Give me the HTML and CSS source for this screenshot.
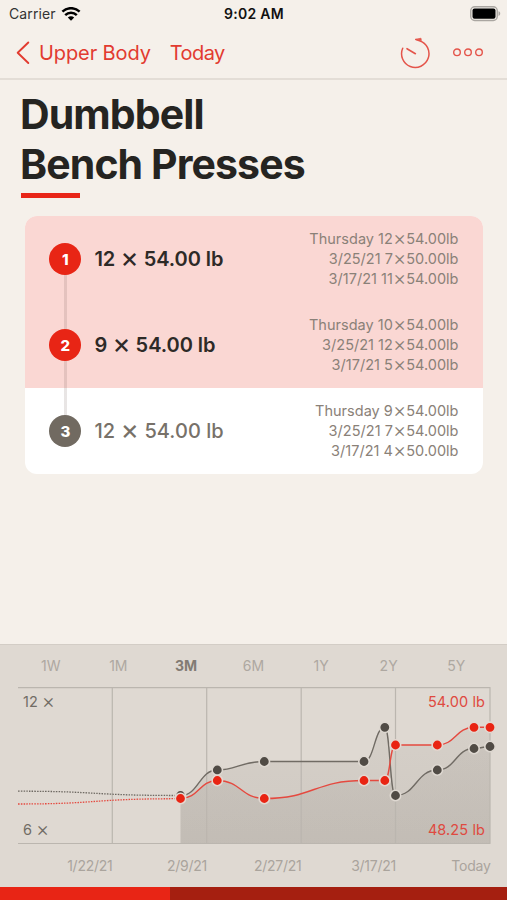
FILE: index.html
```html
<!DOCTYPE html>
<html lang="en">
<head>
<meta charset="utf-8">
<meta name="viewport" content="width=device-width, initial-scale=1">
<title>Dumbbell Bench Presses</title>
<link rel="stylesheet" href="styles.css">
</head>
<body>
<div class="screen">
  <header class="header">
    <div class="status">
      <div class="carrier"><span>Carrier</span>
        <svg width="20" height="14" viewBox="0 0 20 14" fill="none" stroke="#000" stroke-width="2.5"><path d="M1.400 4.700C6.200 0 13.800 0 18.600 4.700"/><path d="M4.200 8.200C7.500 5 12.500 5 15.800 8.200"/><path d="M6.800 10.400C8.600 8.700 11.400 8.700 13.200 10.400L10 13.700Z" fill="#000" stroke="none"/></svg>
      </div>
      <div class="clock">9:02 AM</div>
      <svg class="battery" width="31" height="16" viewBox="0 0 31 16"><rect x=".75" y=".75" width="26.500" height="13.700" rx="4" fill="none" stroke="#aaa6a1" stroke-width="1.400"/><rect x="2.500" y="2.500" width="23" height="10.200" rx="2" fill="#000"/><path d="M28.500 5.300C30.800 6 30.800 9.200 28.500 9.900Z" fill="#aaa6a1"/></svg>
    </div>
    <nav class="nav">
      <svg class="back" width="14" height="24" viewBox="0 0 14 24" fill="none" stroke="#e23b30" stroke-width="1.900" stroke-linecap="round" stroke-linejoin="round"><path d="M12.300 1.500 1.700 11.800 12.300 22"/></svg>
      <a class="parent">Upper Body</a>
      <a class="today">Today</a>
      <svg class="timer" width="32" height="32" viewBox="0 0 32 32" fill="none" stroke="#e4544a" stroke-width="1.500" stroke-linecap="round"><path d="M3.700 11.300A13.700 13.700 0 1 0 20.500 3.700L17 2.500"/><path d="M16.500 2.300 22 1.200 22.300 3.300Z" fill="#e4544a" stroke-width=".7" stroke-linejoin="round"/><path d="M8 11.700 16.400 16.700" stroke-width="1.600"/></svg>
      <svg class="more" width="32" height="10" viewBox="0 0 32 10" fill="none" stroke="#e4544a" stroke-width="1.400"><circle cx="5" cy="4.300" r="3.300"/><circle cx="16" cy="4.300" r="3.300"/><circle cx="27" cy="4.300" r="3.300"/></svg>
    </nav>
  </header>

  <main class="content">
    <h1 class="title"><span class="line-a">Dumbbell</span><br><span class="line-b">Bench Presses</span></h1>
    <div class="accent"></div>
    <section class="sets">
      <div class="set done first">
        <span class="num">1</span>
        <span class="reps">12 <i>×</i> 54.00 lb</span>
        <div class="history"><p>Thursday 12<i>×</i>54.00lb</p><p>3/25/21 7<i>×</i>50.00lb</p><p>3/17/21 11<i>×</i>54.00lb</p></div>
      </div>
      <div class="set done">
        <span class="num">2</span>
        <span class="reps">9 <i>×</i> 54.00 lb</span>
        <div class="history"><p>Thursday 10<i>×</i>54.00lb</p><p>3/25/21 12<i>×</i>54.00lb</p><p>3/17/21 5<i>×</i>54.00lb</p></div>
      </div>
      <div class="set last">
        <span class="num">3</span>
        <span class="reps">12 <i>×</i> 54.00 lb</span>
        <div class="history"><p>Thursday 9<i>×</i>54.00lb</p><p>3/25/21 7<i>×</i>54.00lb</p><p>3/17/21 4<i>×</i>50.00lb</p></div>
      </div>
    </section>
  </main>

  <section class="panel">
    <div class="ranges"><span>1W</span><span>1M</span><span class="active">3M</span><span>6M</span><span>1Y</span><span>2Y</span><span>5Y</span></div>
    <div class="chart">
      <svg width="507" height="158" viewBox="0 687 507 158" fill="none">
        <defs><linearGradient id="shade" gradientUnits="userSpaceOnUse" x1="0" y1="727" x2="0" y2="844"><stop offset="0" stop-color="#716b63" stop-opacity=".09"/><stop offset="1" stop-color="#716b63" stop-opacity=".14"/></linearGradient></defs>
        <path fill="url(#shade)" d="M180.500 843.500V795.500C199 795.500 199 770 217.300 770C236 770 241 761.500 264.300 761.500H364C374.400 761.500 374.400 727.300 384.800 727.300C390 727.300 390 795.500 395.300 795.500C416.300 795.500 416.300 770 437.300 770C455.600 770 455.600 748.500 474 748.500C482 748.500 482 746.500 490 746.500V843.500Z"/>
        <path fill="url(#shade)" d="M180.500 843.500V798.500C199 798.500 199 780.500 217.300 780.500C241 780.500 241 798.500 264.300 798.500C314 798.500 314 780.500 364 780.500H384.800C390 780.500 390 745 395.300 745H437.300C455.600 745 455.600 727.300 474 727.300H490V843.500Z"/>
        <path stroke="#bbb6af" stroke-width="1.200" d="M18 687.700H490.500M18 843.500H490.500M112.300 687.500V843.500M206.700 687.500V843.500M301.200 687.500V843.500M395.500 687.500V843.500M490 687.500V843.500"/>
        <g stroke-width="1.300" stroke-dasharray="1.500 1.200"><path stroke="#6e6962" d="M18 791.200C100 791.200 90 795.500 180 795.500"/><path stroke="#e5493f" d="M18 804C100 804 90 798.700 180 798.700"/></g>
        <path stroke="#706b64" stroke-width="1.400" d="M180.500 795.500C199 795.500 199 770 217.300 770C236 770 241 761.500 264.300 761.500H364C374.400 761.500 374.400 727.300 384.800 727.300C390 727.300 390 795.500 395.300 795.500C416.300 795.500 416.300 770 437.300 770C455.600 770 455.600 748.500 474 748.500C482 748.500 482 746.500 490 746.500"/>
        <g fill="#504b45" stroke="#ded8d1" stroke-width="1.600"><circle cx="180.500" cy="795.500" r="5.200"/><circle cx="217.300" cy="770" r="5.200"/><circle cx="264.300" cy="761.500" r="5.200"/><circle cx="364" cy="761.500" r="5.200"/><circle cx="384.800" cy="727.300" r="5.200"/><circle cx="395.500" cy="795.500" r="5.200"/><circle cx="437.300" cy="770" r="5.200"/><circle cx="474" cy="748.500" r="5.200"/><circle cx="490" cy="746.500" r="5.200"/></g>
        <path stroke="#e5493f" stroke-width="1.400" d="M180.500 798.500C199 798.500 199 780.500 217.300 780.500C241 780.500 241 798.500 264.300 798.500C314 798.500 314 780.500 364 780.500H384.800C390 780.500 390 745 395.300 745H437.300C455.600 745 455.600 727.300 474 727.300H490"/>
        <g fill="#e92413" stroke="#e3d8d1" stroke-width="1.600"><circle cx="180.500" cy="798.500" r="5.200"/><circle cx="217.300" cy="780.500" r="5.200"/><circle cx="264.300" cy="798.500" r="5.200"/><circle cx="364" cy="780.500" r="5.200"/><circle cx="384.800" cy="780.500" r="5.200"/><circle cx="395.500" cy="745" r="5.200"/><circle cx="437.300" cy="745" r="5.200"/><circle cx="474" cy="727.300" r="5.200"/><circle cx="490" cy="727.300" r="5.200"/></g>
      </svg>
      <span class="scale top left">12 <i>×</i></span><span class="scale top right">54.00 lb</span>
      <span class="scale bottom left">6 <i>×</i></span><span class="scale bottom right">48.25 lb</span>
    </div>
    <div class="dates"><span>1/22/21</span><span>2/9/21</span><span>2/27/21</span><span>3/17/21</span><span>Today</span></div>
  </section>
  <div class="progress"><div class="elapsed"></div></div>
</div>
</body>
</html>
```
FILE: styles.css
```css
* { box-sizing: border-box; }
body { margin: 0; background: #f5f0ea; }
i { font-style: normal; font-size: 1.4em; line-height: 0; font-weight: 300; vertical-align: -.045em; }
p { margin: 0; }
svg { display: block; flex: none; }
.screen {
  width: 507px; height: 900px; overflow: hidden;
  display: flex; flex-direction: column;
  font-family: Inter, "Liberation Sans", sans-serif;
  font-feature-settings: "calt" 0;
}
.header { height: 80px; border-bottom: 2px solid #e3ddd6; }
.status {
  display: grid; grid-template-columns: 1fr auto 1fr; align-items: center;
  height: 27px; padding: 0 6px 0 9px; font-size: 14px; color: #111;
}
.carrier { display: flex; gap: 5px; align-items: center; letter-spacing: .1px; color: #333; }
.clock { font-weight: 600; letter-spacing: .25px; margin-right: 2px; }
.battery { justify-self: end; }
.nav { display: flex; align-items: center; height: 51px; padding-left: 16px; font-size: 20px; color: #e23b30; }
.parent { margin-left: 9px; letter-spacing: -.1px; }
.today { margin-left: 19px; letter-spacing: -.6px; }
.timer { margin-left: auto; }
.more { margin: 0 23px 0 21px; }
.content { flex: 1; }
.title { margin: 9px 0 0 20px; font-size: 41px; line-height: 50px; font-weight: 700; color: #252421; letter-spacing: -.9px; }
.accent { width: 59px; height: 5px; margin: 4px 0 0 20.500px; background: #e82518; }
.sets { margin: 18px 24.500px 0 25.400px; border-radius: 12px; overflow: hidden; background: #fff; }
.set { display: flex; align-items: center; height: 86px; padding: 0 24px; background-repeat: no-repeat; color: #777169; white-space: nowrap; }
.done { background-color: #fad7d3; color: #2d2a27; }
.set { background-image: linear-gradient(rgba(80,55,50,.13), rgba(80,55,50,.13)); background-size: 3px 100%; background-position: 39px 0; }
.first { background-size: 3px 50%; background-position: 39px 100%; }
.last { background-size: 3px 50%; }
.num {
  width: 32px; height: 32px; border-radius: 50%; background: #716a61; color: #fff;
  display: grid; place-items: center; font-size: 15px; font-weight: 800;
}
.done .num { background: #e82515; }
.reps { margin-left: 13px; font-size: 20px; font-weight: 500; letter-spacing: .05px; }
.reps i { font-weight: 400; }
.done .reps { font-weight: 600; letter-spacing: -.05px; }
.history { margin-left: auto; text-align: right; font-size: 14.500px; line-height: 20px; color: #8a8178; letter-spacing: .02px; }
.panel { height: 243px; background: #dfd9d2; border-top: 1px solid #d3cdc6; }
.ranges {
  display: grid; grid-template-columns: repeat(7, 1fr); place-items: center;
  height: 42px; padding-bottom: 1px; margin: 0 17px; font-size: 14px; color: #aea8a1;
}
.active { font-weight: 700; color: #827c74; }
.chart { position: relative; }
.scale { position: absolute; font-size: 14.500px; line-height: 18px; white-space: nowrap; }
.top { top: 6px; }
.bottom { bottom: 6px; }
.left { left: 23px; color: #716c65; }
.right { right: 22px; color: #df4a40; letter-spacing: .1px; }
.dates {
  display: grid; grid-template-columns: 94.500px 94.500px 94.500px 94.500px 94.500px; margin-left: 18px;
  text-align: right; font-size: 14px; line-height: 18px; padding-top: 12px; color: #aaa49d; letter-spacing: -.25px;
}
.progress { height: 13px; background: #a51f10; }
.elapsed { width: 170px; height: 13px; background: #e82515; }
```
